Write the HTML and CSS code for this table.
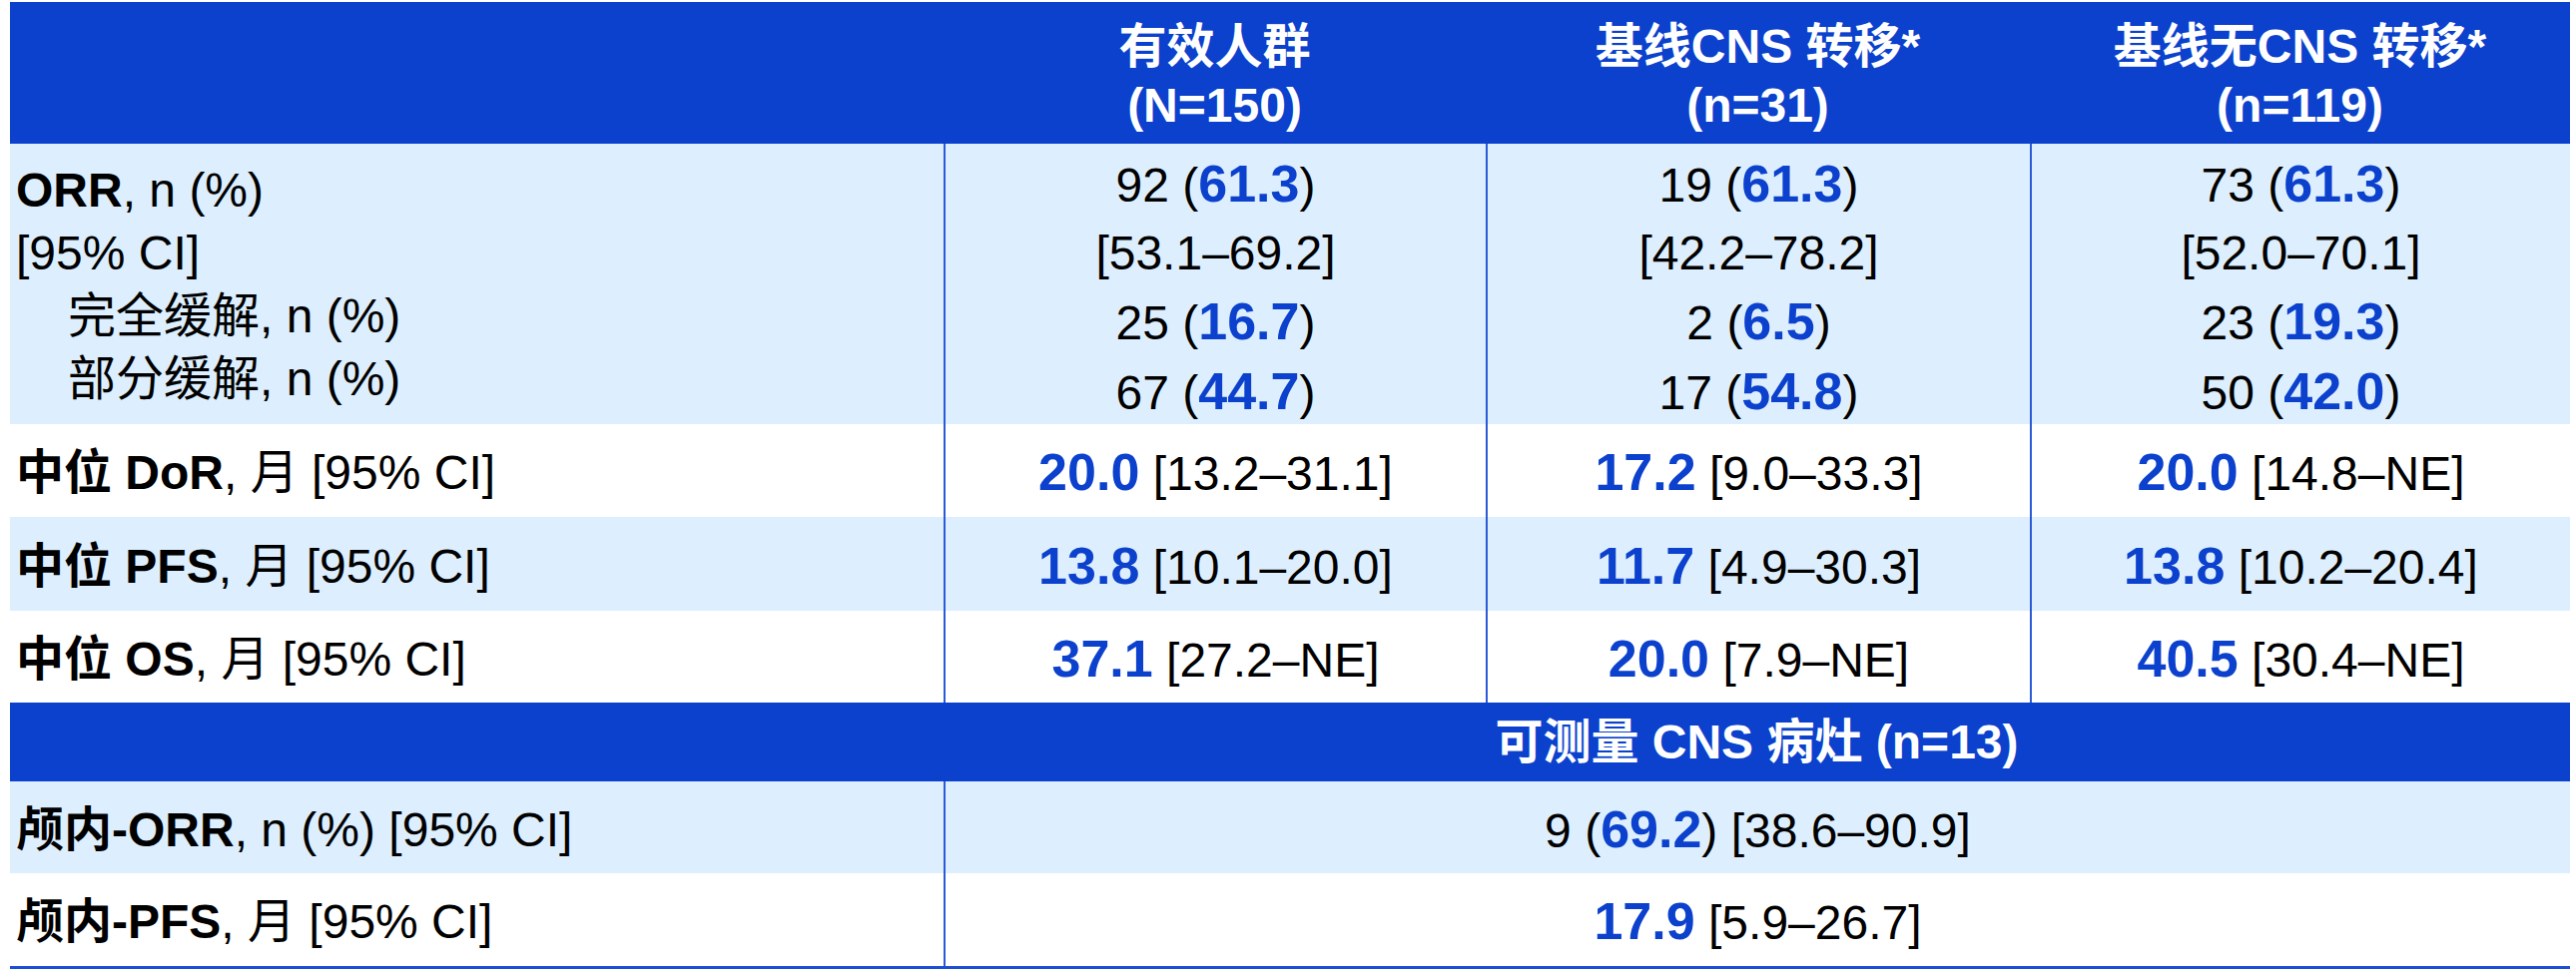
FILE: index.html
```html
<!DOCTYPE html>
<html lang="zh-CN">
<head>
<meta charset="utf-8">
<title>疗效汇总</title>
<link rel="stylesheet" href="styles.css">
</head>
<body>
<div class="page">
  <div class="tbl">
    <!-- header -->
    <div class="c hd"></div>
    <div class="c hd"><div>有效人群</div><div>(N=150)</div></div>
    <div class="c hd"><div>基线CNS 转移*</div><div>(n=31)</div></div>
    <div class="c hd"><div>基线无CNS 转移*</div><div>(n=119)</div></div>

    <!-- ORR group -->
    <div class="c lt lab grp">
      <div><b>ORR</b>, n (%)</div>
      <div>[95% CI]</div>
      <div class="ind">完全缓解, n (%)</div>
      <div class="ind">部分缓解, n (%)</div>
    </div>
    <div class="c lt v grpv">
      <div>92 (<b class="n">61.3</b>)</div>
      <div>[53.1–69.2]</div>
      <div>25 (<b class="n">16.7</b>)</div>
      <div>67 (<b class="n">44.7</b>)</div>
    </div>
    <div class="c lt v grpv">
      <div>19 (<b class="n">61.3</b>)</div>
      <div>[42.2–78.2]</div>
      <div>2 (<b class="n">6.5</b>)</div>
      <div>17 (<b class="n">54.8</b>)</div>
    </div>
    <div class="c lt v grpv">
      <div>73 (<b class="n">61.3</b>)</div>
      <div>[52.0–70.1]</div>
      <div>23 (<b class="n">19.3</b>)</div>
      <div>50 (<b class="n">42.0</b>)</div>
    </div>

    <!-- DoR -->
    <div class="c wh lab one"><span><b>中位 DoR</b>, 月 [95% CI]</span></div>
    <div class="c wh v one"><span><b class="n">20.0</b> [13.2–31.1]</span></div>
    <div class="c wh v one"><span><b class="n">17.2</b> [9.0–33.3]</span></div>
    <div class="c wh v one"><span><b class="n">20.0</b> [14.8–NE]</span></div>

    <!-- PFS -->
    <div class="c lt lab one"><span><b>中位 PFS</b>, 月 [95% CI]</span></div>
    <div class="c lt v one"><span><b class="n">13.8</b> [10.1–20.0]</span></div>
    <div class="c lt v one"><span><b class="n">11.7</b> [4.9–30.3]</span></div>
    <div class="c lt v one"><span><b class="n">13.8</b> [10.2–20.4]</span></div>

    <!-- OS -->
    <div class="c wh lab one"><span><b>中位 OS</b>, 月 [95% CI]</span></div>
    <div class="c wh v one"><span><b class="n">37.1</b> [27.2–NE]</span></div>
    <div class="c wh v one"><span><b class="n">20.0</b> [7.9–NE]</span></div>
    <div class="c wh v one"><span><b class="n">40.5</b> [30.4–NE]</span></div>

    <!-- sub header -->
    <div class="c sub"></div>
    <div class="c sub span3"><span>可测量 CNS 病灶 (n=13)</span></div>

    <!-- intracranial -->
    <div class="c lt lab one"><span><b>颅内-ORR</b>, n (%) [95% CI]</span></div>
    <div class="c lt v one span3"><span>9 (<b class="n">69.2</b>) [38.6–90.9]</span></div>

    <div class="c wh lab one"><span><b>颅内-PFS</b>, 月 [95% CI]</span></div>
    <div class="c wh v one span3"><span><b class="n">17.9</b> [5.9–26.7]</span></div>
  </div>
</div>
</body>
</html>
```

FILE: styles.css
```css
html, body {
  margin: 0;
  padding: 0;
  background: #ffffff;
}

body {
  font-family: "Liberation Sans", Arial, "Noto Sans CJK SC", sans-serif;
  font-size: 48px;
  color: #000000;
}

.page {
  padding: 2px 0 0 10px;
}

.tbl {
  display: grid;
  width: 2564px;
  grid-template-columns: 935px 543px 545px 541px;
  grid-template-rows: 142px 281px 93px 94px 92px 79px 92px 93px;
  border-bottom: 3px solid #1d4fd5;
}

.c {
  box-sizing: border-box;
  min-width: 0;
}

.hd {
  background: #0b41cc;
  color: #ffffff;
  font-weight: bold;
  font-size: 48px;
  line-height: 59px;
  text-align: center;
  padding-top: 15px;
  white-space: nowrap;
}

.lt {
  background: #ddeffe;
}

.wh {
  background: #ffffff;
}

.v {
  border-left: 2px solid #2a5ad6;
  text-align: center;
  white-space: nowrap;
}

.lab {
  padding-left: 6px;
  white-space: nowrap;
}

.grp {
  line-height: 63px;
  padding-top: 15px;
}

.grpv {
  line-height: 68px;
  padding-top: 6px;
}

.ind {
  padding-left: 52px;
}

.one {
  display: flex;
  align-items: center;
  padding-top: 5px;
  line-height: 60px;
}

.one.v {
  justify-content: center;
}

.n {
  color: #0c41cd;
  font-weight: bold;
  font-size: 52px;
}

.sub {
  background: #0b41cc;
  color: #ffffff;
  font-weight: bold;
  font-size: 48px;
  line-height: 60px;
  display: flex;
  align-items: center;
  justify-content: center;
  white-space: nowrap;
}

.span3 {
  grid-column: 2 / span 3;
}
```
